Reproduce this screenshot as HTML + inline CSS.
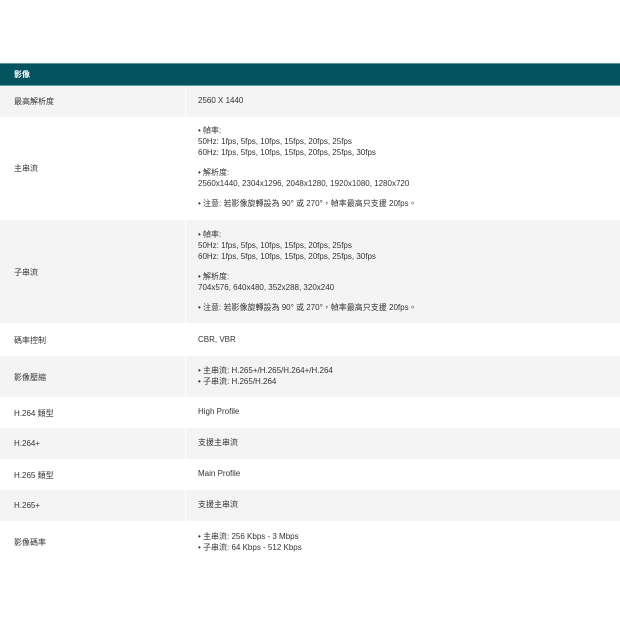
<!DOCTYPE html>
<html><head><meta charset="utf-8"><style>
body{margin:0;width:620px;height:620px;background:#fff;font-family:"Liberation Sans","Noto Sans CJK TC",sans-serif;font-size:8px;color:#333;position:relative;overflow:hidden}
.r{position:absolute;left:0;width:620px}
.g{background:#f4f4f4}
.l{position:absolute;left:14px}
.v{position:absolute;left:198px;line-height:11px}
.d{position:absolute;left:185px;top:0;bottom:0;width:1px;background:#fff}
.h{position:absolute;top:63px;left:0;width:620px;height:23px;background:#02535e;border-top:1px solid #5a9aa2;border-bottom:1px solid #5a9aa2;box-sizing:border-box;color:#fff;font-weight:bold;font-size:8px;line-height:21px;padding-left:14px}
</style></head><body>
<div class="h">影像</div>
<div class="r g" style="top:86px;height:31px"><div class="d"></div><div class="l" style="top:10px">最高解析度</div><div class="v" style="top:9px">2560 X 1440</div></div>
<div class="r" style="top:117px;height:103px"><div class="l" style="top:46px">主串流</div><div class="v" style="top:8px">• 幀率:<br>50Hz: 1fps, 5fps, 10fps, 15fps, 20fps, 25fps<br>60Hz: 1fps, 5fps, 10fps, 15fps, 20fps, 25fps, 30fps<br><div style="height:9px"></div>• 解析度:<br>2560x1440, 2304x1296, 2048x1280, 1920x1080, 1280x720<br><div style="height:9px"></div>• 注意: 若影像旋轉設為 90° 或 270°，幀率最高只支援 20fps。</div></div>
<div class="r g" style="top:220px;height:103px"><div class="d"></div><div class="l" style="top:47px">子串流</div><div class="v" style="top:9px">• 幀率:<br>50Hz: 1fps, 5fps, 10fps, 15fps, 20fps, 25fps<br>60Hz: 1fps, 5fps, 10fps, 15fps, 20fps, 25fps, 30fps<br><div style="height:9px"></div>• 解析度:<br>704x576, 640x480, 352x288, 320x240<br><div style="height:9px"></div>• 注意: 若影像旋轉設為 90° 或 270°，幀率最高只支援 20fps。</div></div>
<div class="r" style="top:323px;height:33px"><div class="l" style="top:12px">碼率控制</div><div class="v" style="top:11px">CBR, VBR</div></div>
<div class="r g" style="top:356px;height:41px"><div class="d"></div><div class="l" style="top:16px">影像壓縮</div><div class="v" style="top:9px">• 主串流: H.265+/H.265/H.264+/H.264<br>• 子串流: H.265/H.264</div></div>
<div class="r" style="top:397px;height:31px"><div class="l" style="top:11px">H.264 類型</div><div class="v" style="top:9px">High Profile</div></div>
<div class="r g" style="top:428px;height:31px"><div class="d"></div><div class="l" style="top:11px">H.264+</div><div class="v" style="top:9px">支援主串流</div></div>
<div class="r" style="top:459px;height:31px"><div class="l" style="top:11px">H.265 類型</div><div class="v" style="top:9px">Main Profile</div></div>
<div class="r g" style="top:490px;height:31px"><div class="d"></div><div class="l" style="top:11px">H.265+</div><div class="v" style="top:9px">支援主串流</div></div>
<div class="r" style="top:521px;height:36px"><div class="l" style="top:16px">影像碼率</div><div class="v" style="top:10px">• 主串流: 256 Kbps - 3 Mbps<br>• 子串流: 64 Kbps - 512 Kbps</div></div>
</body></html>
